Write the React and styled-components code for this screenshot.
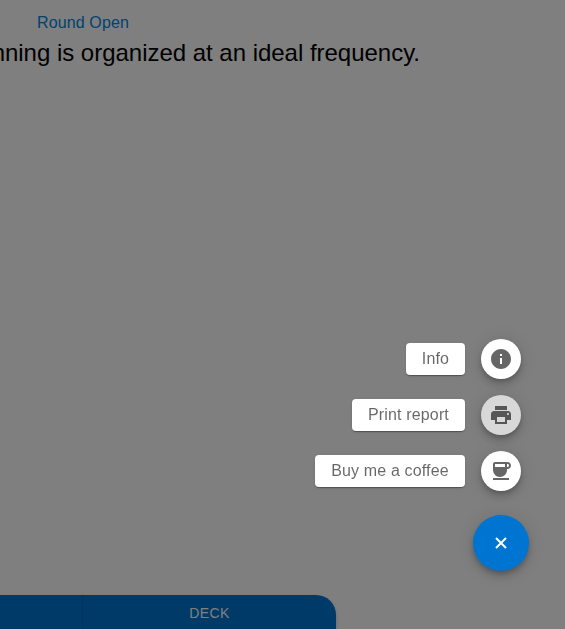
import React from "react";
import styled, { createGlobalStyle } from "styled-components";

const GlobalStyle = createGlobalStyle`
  *, *::before, *::after { box-sizing: border-box; }
  html, body { margin: 0; height: 100%; overflow: hidden; }
  body {
    background: #fff;
    font-family: "Liberation Sans", Arial, sans-serif;
    font-size: 16px;
    line-height: 1.5;
    -webkit-font-smoothing: antialiased;
  }
`;

const Page = styled.div`
  height: 100vh;
  display: flex;
  flex-direction: column;
  overflow: hidden;
`;

const Status = styled.a`
  margin: 11px 0 0 37px;
  align-self: flex-start;
  color: #0084e4;
  line-height: 24px;
  letter-spacing: 0.12px;
  white-space: nowrap;
`;

const Headline = styled.div`
  width: 420px;
  display: flex;
  justify-content: flex-end;
  font-size: 24px;
  line-height: 32px;
  letter-spacing: -0.02px;
  padding-top: 2px;
  color: #000;
  white-space: nowrap;
`;

const Navigation = styled.nav`
  margin-top: auto;
  width: 336px;
  height: 34px;
  display: flex;
  background: #0074d1;
  border-top-right-radius: 20px;
  box-shadow: 0 2px 4px rgba(0, 0, 0, 0.2);
`;

const NavItem = styled.div`
  width: ${(p) => p.$width}px;
  border-right: ${(p) => (p.$divided ? "1px solid #0068bc" : "none")};
  color: #fff;
  font-size: 14px;
  line-height: 36px;
  letter-spacing: 0.4px;
  text-align: center;
`;

const Backdrop = styled.div`
  position: fixed;
  inset: 0;
  background: rgba(0, 0, 0, 0.5);
`;

const SpeedDial = styled.div`
  position: fixed;
  right: 36px;
  bottom: 58px;
  display: flex;
  flex-direction: column;
  align-items: flex-end;
`;

const Actions = styled.div`
  display: flex;
  flex-direction: column;
  align-items: flex-end;
  gap: 16px;
  padding: 0 8px 24px 0;
`;

const Action = styled.div`
  display: flex;
  align-items: center;
  gap: 16px;
`;

const Label = styled.span`
  width: ${(p) => p.$width}px;
  height: 32px;
  line-height: 32px;
  text-align: center;
  white-space: nowrap;
  letter-spacing: 0.15px;
  color: rgba(0, 0, 0, 0.6);
  background: #fff;
  border-radius: 4px;
  box-shadow: 0 2px 1px -1px rgba(0, 0, 0, 0.2), 0 1px 1px rgba(0, 0, 0, 0.14),
    0 1px 3px rgba(0, 0, 0, 0.12);
`;

const RoundButton = styled.button`
  width: ${(p) => p.$size}px;
  height: ${(p) => p.$size}px;
  display: flex;
  align-items: center;
  justify-content: center;
  padding: 0;
  border: 0;
  border-radius: 50%;
  color: ${(p) => (p.$primary ? "#fff" : "rgba(0, 0, 0, 0.6)")};
  background: ${(p) => (p.$primary ? "#0074d1" : p.$active ? "#d8d8d8" : "#fff")};
  box-shadow: 0 3px 5px -1px rgba(0, 0, 0, 0.2), 0 6px 10px rgba(0, 0, 0, 0.14),
    0 1px 18px rgba(0, 0, 0, 0.12);
`;

const Icon = styled.svg`
  width: 24px;
  height: 24px;
  fill: currentColor;
`;

const actions = [
  {
    label: "Info",
    width: 59,
    path: "M12 2C6.48 2 2 6.48 2 12s4.48 10 10 10 10-4.48 10-10S17.52 2 12 2zm1 15h-2v-6h2v6zm0-8h-2V7h2v2z",
  },
  {
    label: "Print report",
    width: 113,
    active: true,
    path: "M19 8H5c-1.66 0-3 1.34-3 3v6h4v4h12v-4h4v-6c0-1.66-1.34-3-3-3zm-3 11H8v-5h8v5zm3-7c-.55 0-1-.45-1-1s.45-1 1-1 1 .45 1 1-.45 1-1 1zm-1-9H6v4h12V3z",
  },
  {
    label: "Buy me a coffee",
    width: 150,
    path: "M18.5 3H6c-1.1 0-2 .9-2 2v5.71c0 3.83 2.95 7.18 6.78 7.29 3.96.12 7.22-3.06 7.22-7v-1h.5c1.93 0 3.5-1.57 3.5-3.5S20.43 3 18.5 3zM16 5v3H6V5h10zm2.5 3H18V5h.5c.83 0 1.5.67 1.5 1.5S19.33 8 18.5 8zM4 19h16v2H4v-2z",
  },
];

export default function App() {
  return (
    <>
      <GlobalStyle />
      <Page>
        <Status>Round Open</Status>
        <Headline>nning is organized at an ideal frequency.</Headline>
        <Navigation>
          <NavItem $width={83} $divided />
          <NavItem $width={253}>DECK</NavItem>
        </Navigation>
      </Page>
      <Backdrop />
      <SpeedDial>
        <Actions>
          {actions.map((a) => (
            <Action key={a.label}>
              <Label $width={a.width}>{a.label}</Label>
              <RoundButton $size={40} $active={a.active} aria-label={a.label}>
                <Icon viewBox="0 0 24 24">
                  <path d={a.path} />
                </Icon>
              </RoundButton>
            </Action>
          ))}
        </Actions>
        <RoundButton $size={56} $primary aria-label="Close">
          <Icon viewBox="0 0 24 24">
            <path d="M7 7l10 10M17 7L7 17" stroke="currentColor" strokeWidth="2" />
          </Icon>
        </RoundButton>
      </SpeedDial>
    </>
  );
}
